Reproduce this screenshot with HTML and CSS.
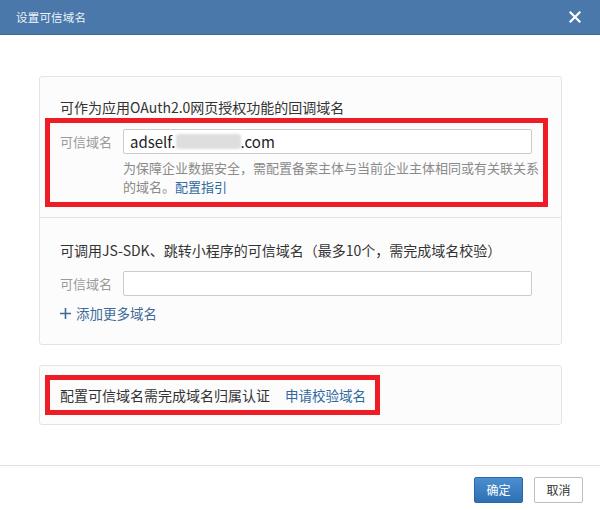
FILE: index.html
```html
<!DOCTYPE html>
<html lang="zh">
<head>
<meta charset="utf-8">
<title>设置可信域名</title>
<link rel="stylesheet" href="styles.css">
</head>
<body>
<div class="dialog">
  <div class="header">
    <span class="title">设置可信域名</span>
    <svg class="close" width="12" height="12" viewBox="0 0 12 12"><path d="M1.5 1.5L10.5 10.5M10.5 1.5L1.5 10.5" stroke="#fff" stroke-width="2.2" stroke-linecap="square"/></svg>
  </div>
  <div class="body">
    <div class="card">
      <div class="section first">
        <div class="heading">可作为应用OAuth2.0网页授权功能的回调域名</div>
        <div class="highlight box1">
          <div class="row">
            <span class="label">可信域名</span>
            <div class="input"><span class="value">adself.</span><span class="blur"></span><span class="value">.com</span></div>
          </div>
          <div class="help">为保障企业数据安全，需配置备案主体与当前企业主体相同或有关联关系的域名。<a class="link">配置指引</a></div>
        </div>
      </div>
      <div class="section second">
        <div class="heading">可调用JS-SDK、跳转小程序的可信域名（最多10个，需完成域名校验）</div>
        <div class="row">
          <span class="label">可信域名</span>
          <div class="input"></div>
        </div>
        <div class="add">
          <svg width="11" height="11" viewBox="0 0 11 11"><path d="M5.5 0V11M0 5.5H11" stroke="#3d6a99" stroke-width="1.6"/></svg>
          <span>添加更多域名</span>
        </div>
      </div>
    </div>
    <div class="card card2">
      <div class="highlight box2">
        <span class="note">配置可信域名需完成域名归属认证</span>
        <a class="link verify">申请校验域名</a>
      </div>
    </div>
  </div>
  <div class="footer">
    <button class="btn primary">确定</button>
    <button class="btn">取消</button>
  </div>
</div>
</body>
</html>
```

FILE: styles.css
```css
* { box-sizing: border-box; }
html, body { margin: 0; padding: 0; }
body {
  width: 600px;
  height: 510px;
  background: #fff;
  font-family: "Noto Sans CJK SC", "Microsoft YaHei", sans-serif;
  color: #333;
  overflow: hidden;
}
.dialog { width: 600px; height: 510px; display: flex; flex-direction: column; }
.header {
  height: 35px;
  background: #4a78aa;
  display: flex;
  align-items: center;
  justify-content: space-between;
  padding: 0 19px 0 16px;
  border-bottom: 1px solid #3f6b9c;
}
.title { color: #eef3f8; font-size: 11.5px; letter-spacing: 0.2px; }
.close { display: block; }
.body { flex: 1; padding: 41px 38px 0 39px; }
.card {
  background: #fcfcfc;
  border: 1px solid #e4e4e4;
  border-radius: 3px;
}
.section { padding-left: 20px; }
.section.first { padding: 21px 0 10px 0; border-bottom: 1px solid #e4e4e4; }
.section.first .heading { padding-left: 20px; }
.section.second { padding: 23px 0 21px 20px; }
.heading { font-size: 14px; line-height: 18px; color: #333; }
.highlight { border: 5px solid #ee1c25; }
.box1 { margin: 2px 13px 0 5px; padding: 6px 10px 6px 10px; }
.row { display: flex; align-items: center; }
.label { width: 63px; font-size: 13px; color: #9a9a9a; flex: none; }
.input {
  width: 409px;
  height: 25px;
  border: 1px solid #ccc;
  border-radius: 2px;
  background: #fff;
  display: flex;
  align-items: center;
  padding-left: 6px;
}
.value { font-size: 15px; color: #222; }
.blur { width: 65px; height: 15px; background: #dedede; border-radius: 3px; filter: blur(1px); }
.help {
  margin: 4px 0 0 63px;
  width: 420px;
  font-size: 13px;
  line-height: 19px;
  color: #8a8a8a;
}
.link { color: #2f69a3; text-decoration: none; cursor: pointer; }
.second .row { margin-top: 12px; }
.add {
  margin-top: 8px;
  display: flex;
  align-items: center;
  gap: 5px;
  color: #3d6a99;
  font-size: 13.5px;
  line-height: 19px;
}
.add svg { display: block; }
.card2 { margin-top: 20px; padding: 9px 0 9px 5px; }
.box2 {
  width: 335px;
  height: 40px;
  display: flex;
  align-items: center;
  padding-left: 10px;
  font-size: 14px;
}
.verify { margin-left: 15px; font-size: 13.5px; }
.footer {
  height: 45px;
  border-top: 1px solid #e2e2e2;
  display: flex;
  justify-content: flex-end;
  align-items: center;
  gap: 11px;
  padding: 0 17px 0 0;
}
.btn {
  width: 49px;
  height: 26px;
  margin-top: 3px;
  font-family: inherit;
  font-size: 12px;
  border: 1px solid #bdbdbd;
  border-radius: 2px;
  background: #fff;
  color: #333;
  padding: 0;
}
.btn.primary {
  background: linear-gradient(#4a8fd0, #2f6fb2);
  border-color: #2b67a6;
  color: #fff;
}
```
